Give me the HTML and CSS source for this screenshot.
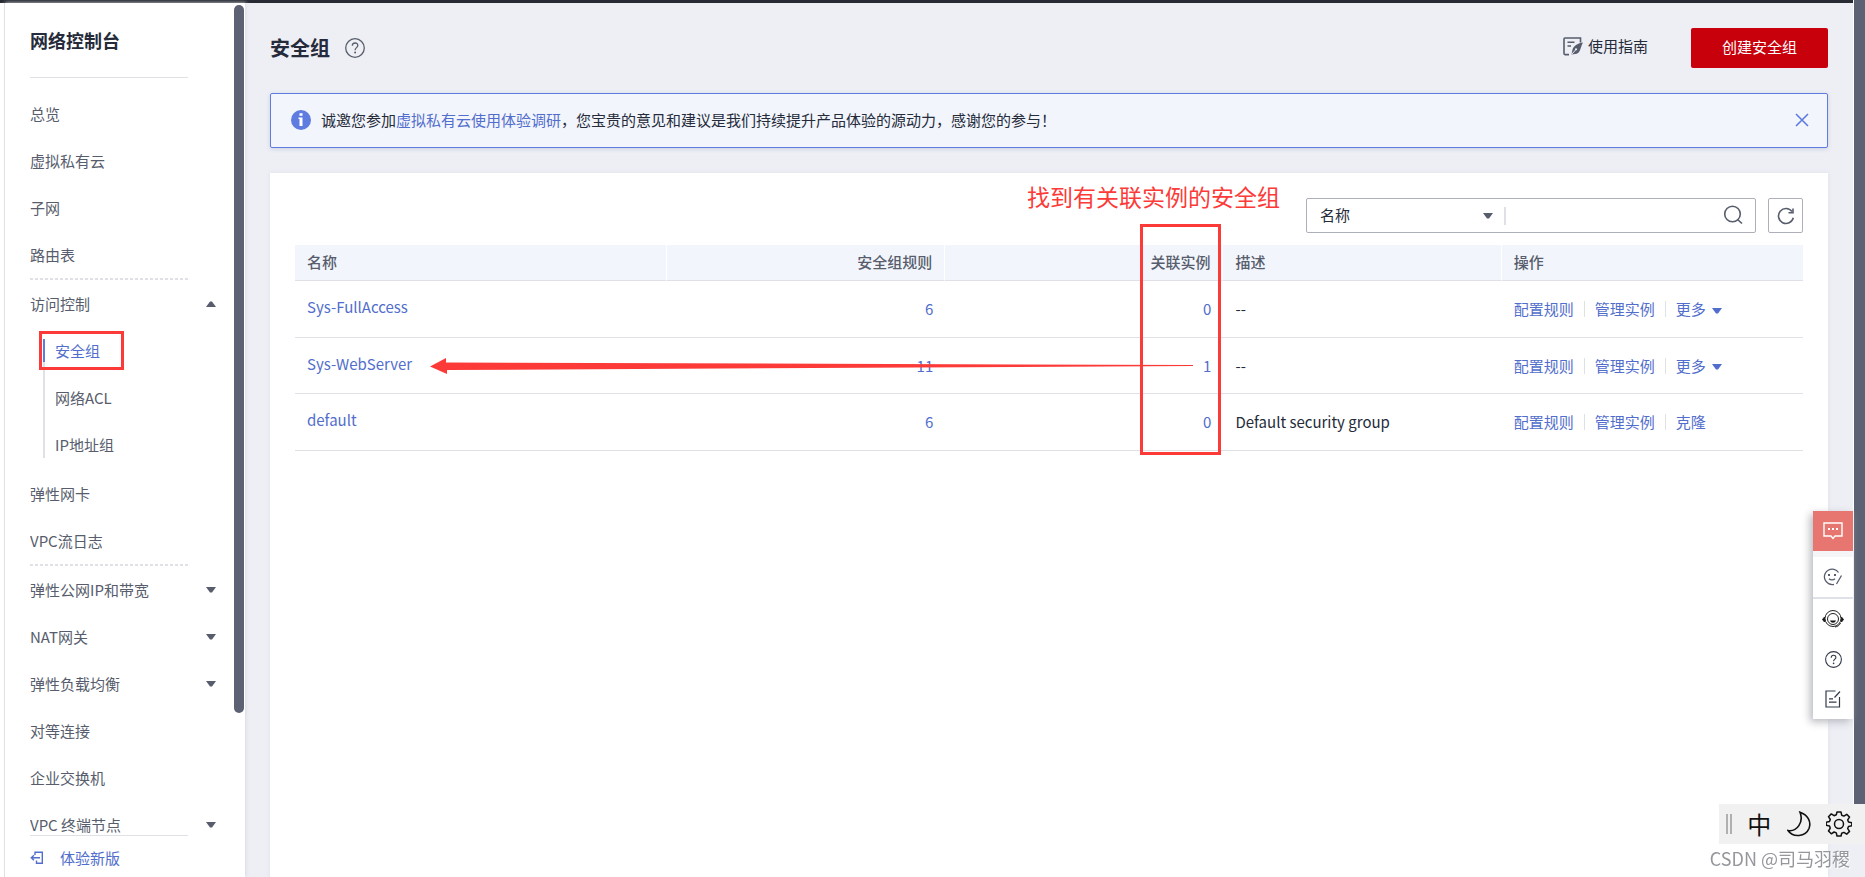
FILE: index.html
```
<!DOCTYPE html>
<html lang="zh-CN">
<head>
<meta charset="utf-8">
<title>安全组</title>
<link rel="stylesheet" href="styles.css">
</head>
<body>
<svg class="defs" aria-hidden="true">
  <symbol id="down" viewBox="0 0 10 6"><path d="M0 0h10L6 5.500H4z" fill="currentColor"/></symbol>
  <symbol id="up" viewBox="0 0 10 6"><path d="M0 6h10L6 .5H4z" fill="currentColor"/></symbol>
  <symbol id="help" viewBox="0 0 20 20"><g fill="none" stroke="currentColor" stroke-width="1.300"><circle cx="10" cy="10" r="9.300"/><path d="M7.300 7.800c0-3.700 5.500-3.700 5.500-.3 0 2.200-2.700 2.100-2.700 4.700"/></g><circle cx="10.100" cy="14.500" r="1" fill="currentColor"/></symbol>
</svg>
<div class="topbar"></div>
<div class="app">
  <aside class="sidebar">
    <h2 class="side-title">网络控制台</h2>
    <nav class="nav">
      <ul class="menu">
        <li><a class="item" href="#">总览</a></li>
        <li><a class="item" href="#">虚拟私有云</a></li>
        <li><a class="item" href="#">子网</a></li>
        <li><a class="item" href="#">路由表</a></li>
        <li class="dash"></li>
        <li><a class="item" href="#">访问控制<svg class="caret"><use href="#up"/></svg></a>
          <ul class="submenu">
            <li><a class="subitem active" href="#">安全组</a><span class="mark mark-menu"></span></li>
            <li><a class="subitem" href="#">网络ACL</a></li>
            <li><a class="subitem" href="#">IP地址组</a></li>
          </ul>
        </li>
        <li><a class="item" href="#">弹性网卡</a></li>
        <li><a class="item" href="#">VPC流日志</a></li>
        <li class="dash"></li>
        <li><a class="item" href="#">弹性公网IP和带宽<svg class="caret"><use href="#down"/></svg></a></li>
        <li><a class="item" href="#">NAT网关<svg class="caret"><use href="#down"/></svg></a></li>
        <li><a class="item" href="#">弹性负载均衡<svg class="caret"><use href="#down"/></svg></a></li>
        <li><a class="item" href="#">对等连接</a></li>
        <li><a class="item" href="#">企业交换机</a></li>
        <li><a class="item" href="#">VPC 终端节点<svg class="caret"><use href="#down"/></svg></a></li>
      </ul>
    </nav>
    <a class="side-foot" href="#">
      <svg width="14" height="14" viewBox="0 0 14 14" fill="none" stroke="currentColor" stroke-width="1.400"><path d="M5 4V1.200h7.300v11H6.500V9.500M10 6.700H1.500M4 4.200L1.300 6.700 4 9.200"/></svg>
      <span>体验新版</span>
    </a>
    <div class="side-scroll"></div>
  </aside>

  <main class="main">
    <header class="head">
      <h1 class="title">安全组</h1>
      <svg class="help-icon"><use href="#help"/></svg>
      <a class="guide" href="#">
        <svg width="20" height="19" viewBox="0 0 20 19"><path d="M6 17.600H2a1 1 0 0 1-1-1V2a1 1 0 0 1 1-1h15.500v4.500" fill="none" stroke="currentColor" stroke-width="1.600"/><path d="M4.500 5.300h7M4.500 9h3.500" stroke="currentColor" stroke-width="1.500"/><path d="M20 5.500c-5 .5-9 3-10.500 7L8.500 17.500l5.300-.8c4-1.400 3.500-6.700 6.200-11.200z" fill="currentColor"/><path d="M8.800 17.200l4-4.500" stroke="#eeeff5"/><circle cx="13" cy="12.300" r="1.100" fill="#eeeff5"/></svg>
        使用指南
      </a>
      <button class="primary" type="button">创建安全组</button>
    </header>

    <section class="alert">
      <svg width="20" height="20" viewBox="0 0 20 20"><circle cx="10" cy="10" r="10" fill="#5e7ce0"/><path d="M8.500 3.200h3v2.500h-3zM7.500 7.600h4V16H8.500V9h-1z" fill="#fff"/></svg>
      <p class="alert-text">诚邀您参加<a href="#">虚拟私有云使用体验调研</a>，您宝贵的意见和建议是我们持续提升产品体验的源动力，感谢您的参与！</p>
      <button class="close" type="button" aria-label="关闭"><svg width="14" height="14" viewBox="0 0 14 14"><path d="M1 1l12 12M13 1L1 13" stroke="currentColor" stroke-width="1.600"/></svg></button>
    </section>

    <section class="card">
      <div class="tools">
        <div class="search">
          <select class="field" aria-label="搜索字段"><option>名称</option></select>
          <svg class="caret search-caret"><use href="#down"/></svg>
          <input class="query" type="text" aria-label="搜索">
          <button class="search-btn" type="button" aria-label="搜索"><svg width="20" height="20" viewBox="0 0 20 20" fill="none" stroke="currentColor" stroke-width="1.600"><circle cx="9.500" cy="9" r="7.800"/><path d="M14.500 14.500l4.500 4"/></svg></button>
        </div>
        <button class="refresh" type="button" aria-label="刷新"><svg width="18" height="18" viewBox="0 0 18 18" fill="none" stroke="currentColor" stroke-width="1.600"><path d="M16.300 10.800A7.500 7.500 0 1 1 15 4.500"/><path d="M16 1.500v4.300h-4.500"/></svg></button>
      </div>
      <div class="table-wrap">
        <table class="table">
          <colgroup><col class="c-name"><col class="c-mid"><col class="c-mid"><col class="c-mid"><col></colgroup>
          <thead><tr><th>名称</th><th class="num">安全组规则</th><th class="num">关联实例</th><th>描述</th><th>操作</th></tr></thead>
          <tbody>
            <tr><td class="name"><a href="#">Sys-FullAccess</a></td><td class="num"><a href="#">6</a></td><td class="num"><a href="#">0</a></td><td>--</td>
              <td><div class="ops"><a href="#">配置规则</a><a href="#">管理实例</a><a href="#">更多<svg class="caret"><use href="#down"/></svg></a></div></td></tr>
            <tr><td class="name"><a href="#">Sys-WebServer</a></td><td class="num"><a href="#">11</a></td><td class="num"><a href="#">1</a></td><td>--</td>
              <td><div class="ops"><a href="#">配置规则</a><a href="#">管理实例</a><a href="#">更多<svg class="caret"><use href="#down"/></svg></a></div></td></tr>
            <tr><td class="name"><a href="#">default</a></td><td class="num"><a href="#">6</a></td><td class="num"><a href="#">0</a></td><td>Default security group</td>
              <td><div class="ops"><a href="#">配置规则</a><a href="#">管理实例</a><a href="#">克隆</a></div></td></tr>
          </tbody>
        </table>
        <p class="note">找到有关联实例的安全组</p>
        <span class="mark mark-column"></span>
        <svg class="arrow" viewBox="0 0 763 16" preserveAspectRatio="none"><path d="M0 8.500L16 0V4.500L763 7v1L17 12v4z" fill="#fc3a38"/></svg>
      </div>
    </section>
  </main>
</div>

<div class="page-scroll"></div>

<div class="dock">
  <button class="dock-btn dock-red" type="button" aria-label="反馈"><svg width="20" height="18" viewBox="0 0 20 18"><path d="M1 1h18v13h-7l-2 2.500L8 14H1z" fill="none" stroke="currentColor" stroke-width="1.400"/><path d="M5 7h2M9 7h2M13 7h2" stroke="currentColor" stroke-width="2"/></svg></button>
  <div class="dock-group">
    <button class="dock-btn" type="button" aria-label="满意度"><svg width="20" height="18" viewBox="0 0 20 18" fill="none" stroke="#575d6c" stroke-width="1.300"><path d="M15.500 4.500A7.700 7.700 0 1 0 11 16.300M18.500 7.500l-5 8.500M6 10.700c1.500 1.600 4.500 1.600 6 0"/><path d="M5 7h2M11 7h2" stroke-width="1.800"/></svg></button>
  </div>
  <div class="dock-group">
    <button class="dock-btn" type="button" aria-label="客服"><svg width="22" height="18" viewBox="0 0 22 18" fill="none" stroke="#222"><circle cx="11" cy="8.500" r="8"/><circle cx="11" cy="9" r="5.500"/><path d="M.5 9.500L2.500 7v5zM21.500 9.500L19.500 7v5z" fill="#111"/><path d="M8 10.500h6c-1 3-5 3-6 0z" fill="#111" stroke="none"/><path d="M18.500 13c-1 2.500-3 3.500-5.500 4"/></svg></button>
    <button class="dock-btn" type="button" aria-label="帮助"><svg width="17" height="17"><use href="#help"/></svg></button>
    <button class="dock-btn" type="button" aria-label="记录"><svg width="16" height="18" viewBox="0 0 16 18" fill="none" stroke="currentColor" stroke-width="1.200"><path d="M10.500 1H1v16h13.500V7M15 1.500L9.500 7.500M4 8.800h4M4 12.200h7.500"/></svg></button>
  </div>
</div>

<div class="ime">
  <span class="grip"></span>
  <span class="ime-lang">中</span>
  <svg width="24" height="26" viewBox="0 0 24 26" fill="none" stroke="#111" stroke-width="1.600"><path d="M13 1.200C21 4 24.500 11 22 17.500 18.500 26 6 27 1 19.500 10 21 17 11 13 1.200z"/></svg>
  <svg width="26" height="26" viewBox="-13 -13 26 26" fill="none" stroke="#111" stroke-width="1.500" stroke-linejoin="round"><circle r="4.500"/><path d="M-2-12h4l.7 3.200 2.200.9 2.800-1.800 2.800 2.800-1.800 2.800.8 2.100 3.300.7v3l-3.300.7-.8 2.200 1.800 2.800-2.800 2.800-2.800-1.800-2.200.9L2 12h-4l-.7-3.100-2.200-.9-2.800 1.800-2.800-2.800 1.800-2.800-.8-2.200-3.300-.7v-3l3.300-.7.8-2.100-1.800-2.800 2.800-2.800 2.800 1.800 2.200-.9z"/></svg>
</div>
<div class="watermark">CSDN @司马羽稷</div>
</body>
</html>
```
FILE: styles.css
```
* { box-sizing: border-box; }
body {
  margin: 0;
  height: 100vh;
  display: flex;
  flex-direction: column;
  overflow: hidden;
  background: #eeeff5;
  color: #252b3a;
  font: 15px/20px "Noto Sans CJK SC", sans-serif;
}
h1, h2, p, ul { margin: 0; padding: 0; }
ul { list-style: none; }
a { color: #526ecc; text-decoration: none; }
button { padding: 0; border: 0; background: none; font: inherit; color: #575d6c; display: flex; align-items: center; justify-content: center; }
.defs { position: absolute; width: 0; height: 0; }
.caret { width: 10px; height: 6px; flex: none; }

.topbar { flex: none; height: 3px; margin-right: 12px; background: #282b33; }
.app { flex: 1; display: flex; min-height: 0; }

.sidebar {
  position: relative;
  flex: none;
  width: 241px;
  margin-left: 4px;
  padding-left: 25px;
  display: flex;
  flex-direction: column;
  background: #fff;
  border-left: 1px solid #dfe1e6;
  box-shadow: -4px 0 #fff, 1px 0 4px #d9dbe4;
}
.side-title { width: 158px; height: 75px; padding-top: 24px; font-size: 18px; line-height: 26px; border-bottom: 1px solid #dfe1e6; flex: none; }
.nav { flex: 1; min-height: 0; overflow: hidden; padding-top: 12px; }
.menu { width: 186px; }
.item { display: flex; align-items: center; justify-content: space-between; height: 47px; color: #575d6c; }
.dash { width: 158px; height: 2px; background: repeating-linear-gradient(90deg, #dfe1e6 0 3px, transparent 3px 5px); }
.submenu { position: relative; margin-left: 13px; padding-bottom: 2px; }
.submenu::before { content: ""; position: absolute; left: 0; top: 12px; bottom: 12px; width: 2px; background: #dfe1e6; }
.submenu li { position: relative; }
.subitem { display: flex; align-items: center; height: 47px; padding-left: 12px; color: #575d6c; }
.subitem.active { color: #526ecc; }
.subitem.active::before { content: ""; position: absolute; left: 0; top: 12px; width: 2px; height: 23px; background: #5e7ce0; }
.side-foot { flex: none; width: 158px; height: 42px; display: flex; align-items: center; gap: 16px; padding-top: 2px; border-top: 1px solid #dfe1e6; }
.side-scroll { position: absolute; right: 1px; top: 2px; width: 10px; height: 81%; border-radius: 5px; background: #5c6173; }

.mark { position: absolute; border: 3px solid #fc3a38; }
.mark-menu { left: -4px; top: 4px; width: 85px; height: 39px; }

.main { flex: 1; min-width: 0; padding: 25px 37px 0 25px; display: flex; flex-direction: column; }
.head { display: flex; align-items: center; height: 40px; }
.title { font-size: 20px; line-height: 28px; }
.help-icon { width: 20px; height: 20px; margin-left: 15px; color: #575d6c; }
.guide { margin-left: auto; margin-right: 43px; padding-bottom: 4px; display: flex; align-items: center; gap: 5px; color: #252b3a; }
.guide svg { color: #575d6c; }
.primary { width: 137px; height: 40px; padding-bottom: 2px; border-radius: 2px; background: #c7000b; color: #fff; }

.alert {
  display: flex;
  align-items: center;
  gap: 10px;
  height: 55px;
  margin-top: 25px;
  padding: 0 18px 2px 20px;
  background: #f2f5fc;
  border: 1px solid #5e7ce0;
  border-radius: 2px;
  box-shadow: 0 1px 4px #c9cfe2;
}
.alert-text { flex: 1; }
.close { color: #5e7ce0; }

.card { flex: 1; margin-top: 25px; padding: 25px; background: #fff; box-shadow: 0 0 4px #dddfe8; }
.tools { display: flex; justify-content: flex-end; gap: 12px; }
.search { display: flex; align-items: center; width: 450px; height: 35px; padding-right: 12px; border: 1px solid #adb0b8; border-radius: 2px; }
.field { appearance: none; width: 176px; padding: 0 0 2px 13px; border: 0; background: none; font: inherit; color: #252b3a; }
.search-caret { color: #575d6c; }
.query { flex: 1; min-width: 0; height: 18px; margin-left: 11px; border: 0; border-left: 2px solid #dfe1e6; font: inherit; outline: 0; }
.search-btn { padding-bottom: 2px; }
.refresh { width: 35px; height: 35px; border: 1px solid #adb0b8; border-radius: 2px; }

.table-wrap { position: relative; margin-top: 12px; }
.table { width: 100%; table-layout: fixed; border-collapse: separate; border-spacing: 0; }
.c-name { width: 372px; }
.c-mid { width: 18.45%; }
.table th { height: 36px; padding: 0 12px 2px; text-align: left; font-weight: 500; color: #575d6c; background: #f2f5fc; border-bottom: 1px solid #dfe1e6; border-right: 1px solid #fff; }
.table th:last-child { border-right: 0; }
.table td { height: 57px; padding: 0 12px; border-bottom: 1px solid #dfe1e6; }
.table tr:nth-child(2) td { height: 56px; }
.table .num { text-align: right; }
.table .name { padding-bottom: 4px; }
.ops { display: flex; align-items: center; }
.ops a { display: flex; align-items: center; gap: 6px; line-height: 16px; }
.ops .caret { margin-top: 3px; }
.ops a + a { margin-left: 10px; padding-left: 10px; border-left: 1px solid #dfe1e6; }

.note { position: absolute; right: 523px; top: -65px; font-size: 23px; line-height: 32px; color: #fc3a38; }
.mark-column { right: 582px; top: -21px; width: 81px; height: 231px; }
.arrow { position: absolute; left: 135px; top: 113px; width: calc(100% - 745px); height: 16px; }

.page-scroll { position: fixed; right: 0; top: 0; bottom: 73px; width: 12px; background: #5c6173; border-left: 1px solid #fff; }

.dock { position: fixed; right: 12px; bottom: 158px; width: 40px; background: #f5f5f7; box-shadow: -3px 3px 8px #b9bac0; }
.dock-btn { width: 40px; height: 40px; color: #333a4a; }
.dock-red { background: #e6766f; color: #fff; margin-bottom: 6px; }
.dock-group { background: #fff; }
.dock-group + .dock-group { border-top: 2px solid #dfe1e9; }

.ime { position: fixed; right: 0; bottom: 33px; width: 146px; height: 40px; padding: 0 13px 0 7px; display: flex; align-items: center; justify-content: space-between; background: #f1f1f2; }
.grip { width: 6px; height: 20px; border: solid #b0b0b0; border-width: 0 2px; }
.ime-lang { font-size: 24px; line-height: 32px; color: #111; }
.watermark { position: fixed; right: 15px; bottom: 6px; font-size: 18px; line-height: 26px; color: #95979c; text-shadow: 1px 1px #fff; }
```
